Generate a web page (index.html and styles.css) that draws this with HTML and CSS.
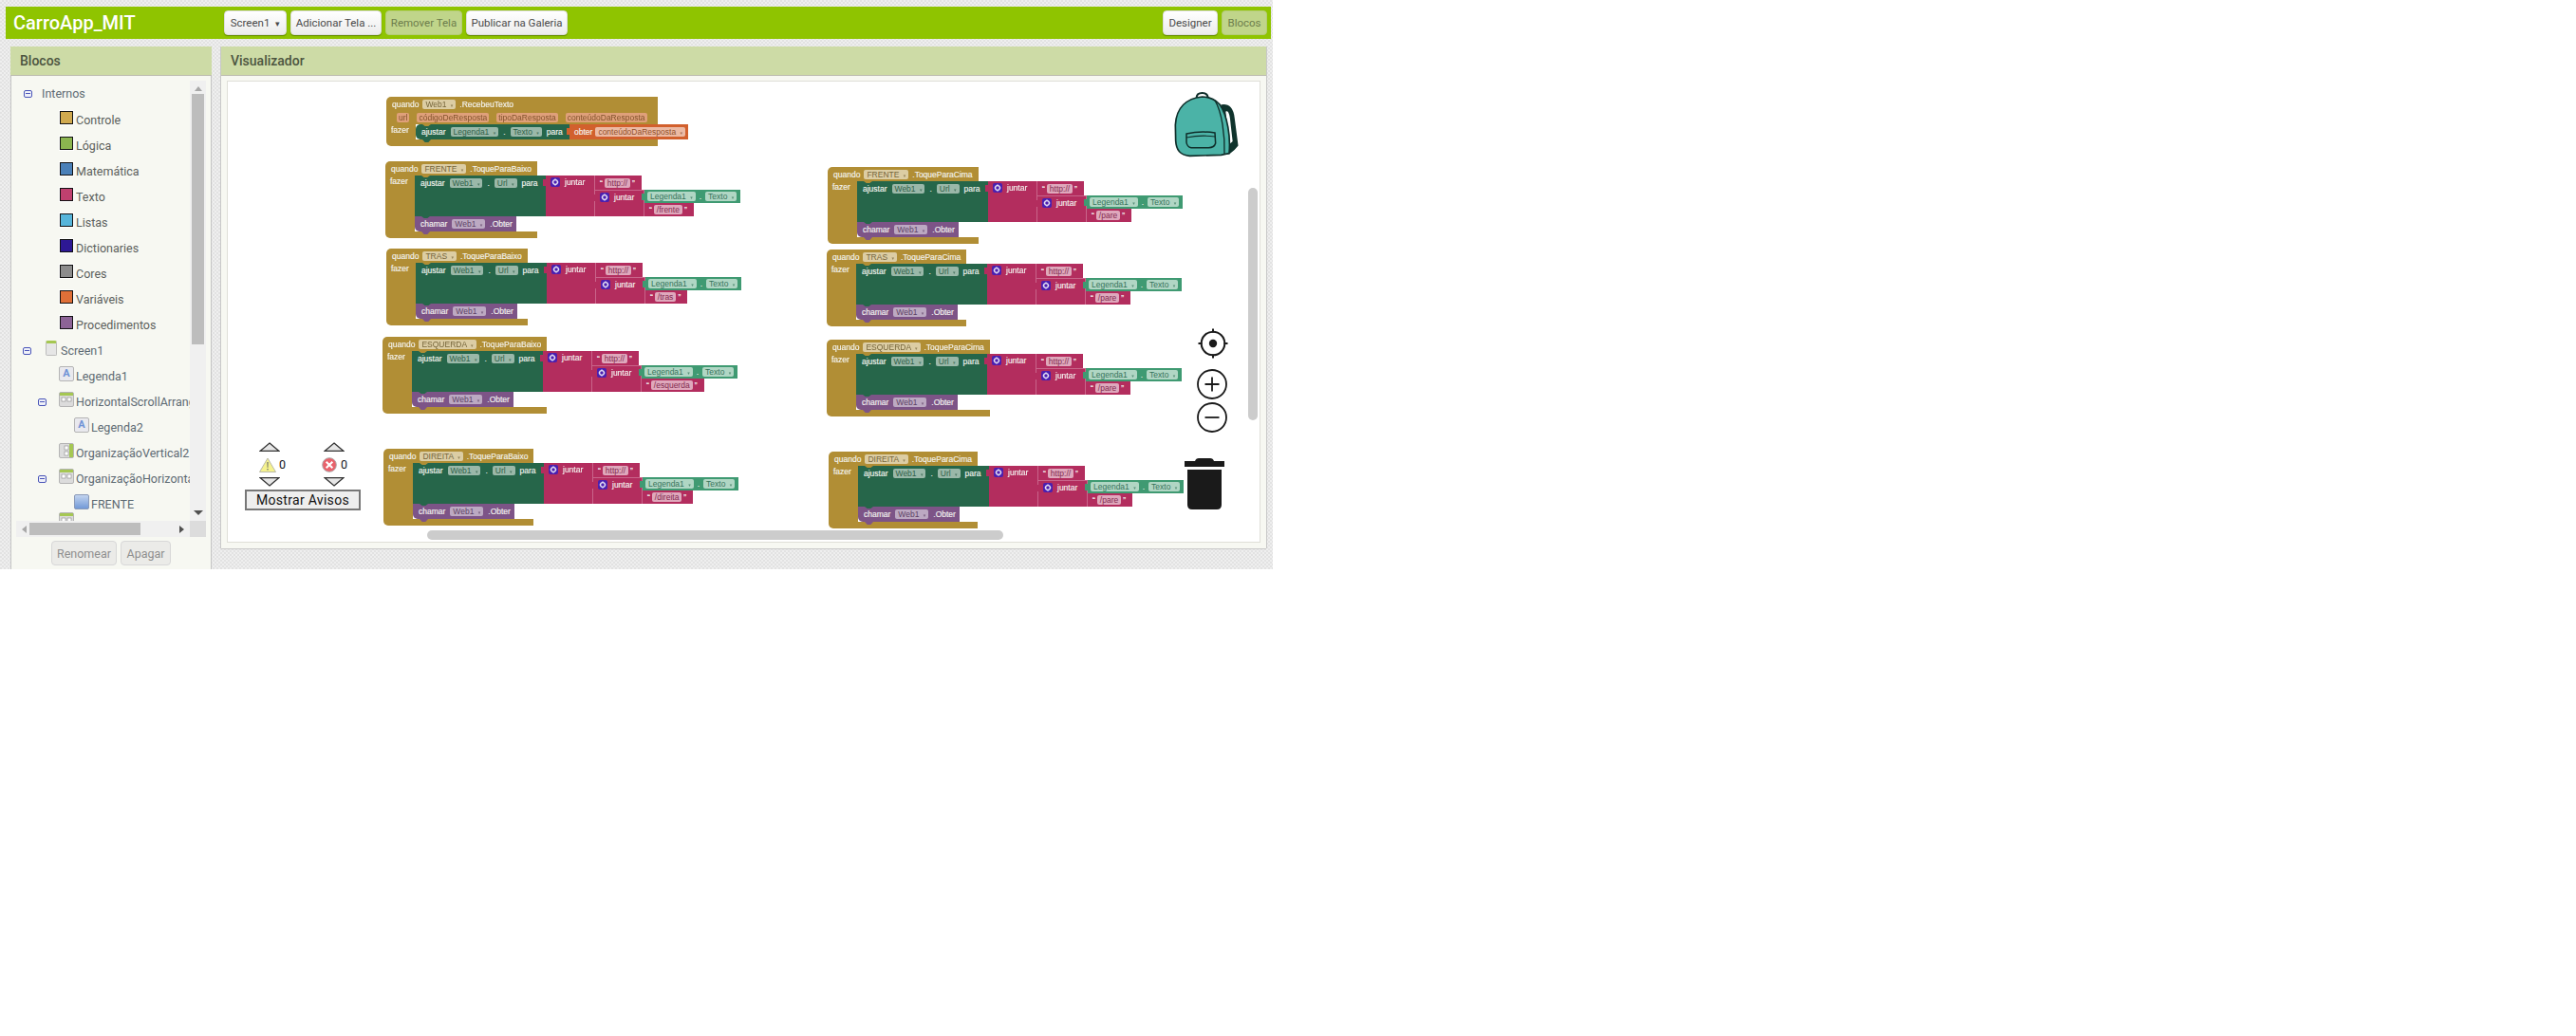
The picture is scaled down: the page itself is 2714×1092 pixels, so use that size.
FILE: index.html
```html
<!DOCTYPE html>
<html lang="pt">
<head>
  <meta charset="UTF-8" />
  <title>CarroApp_MIT - Blocos</title>
  <link rel="stylesheet" href="styles.css">
</head>
<body>
  <svg class="defs" width="0" height="0">
    <symbol id="ico-join" viewBox="0 0 10 10">
      <rect width="10" height="10" rx="2" fill="#4a1fb0"/>
      <circle cx="5" cy="5" r="2.4" fill="none" stroke="#e8e4f6" stroke-width="1.3"/>
      <path d="M5 1.2v1.4M5 7.4v1.4M1.6 5h1.4M7 5h1.4" stroke="#e8e4f6" stroke-width="1"/>
    </symbol>
    <symbol id="ico-hbox" viewBox="0 0 16 16">
      <rect x=".5" y=".5" width="15" height="15" rx="1.5" fill="#dcdcdc" stroke="#b4b4b4"/>
      <path d="M1 1h14v3H1z" fill="#a5c752"/>
      <rect x="3" y="6" width="4" height="4" fill="#fff" stroke="#888" stroke-width=".6"/>
      <rect x="9" y="6" width="4" height="4" fill="#fff" stroke="#888" stroke-width=".6"/>
    </symbol>
    <symbol id="ico-vbox" viewBox="0 0 16 16">
      <rect x=".5" y=".5" width="15" height="15" rx="1.5" fill="#dcdcdc" stroke="#b4b4b4"/>
      <path d="M11 1h4v14h-4z" fill="#a5c752"/>
      <rect x="6" y="3" width="4" height="4" fill="#fff" stroke="#888" stroke-width=".6"/>
      <rect x="6" y="9" width="4" height="4" fill="#fff" stroke="#888" stroke-width=".6"/>
    </symbol>
    <symbol id="ico-tri" viewBox="0 0 22 10">
      <path d="M11 1L21 9.500H1z" fill="#e6e6e6" stroke="#333" stroke-width="1.300"/>
    </symbol>
    <linearGradient id="btn-blue" x1="0" y1="0" x2="0" y2="1">
      <stop offset="0" stop-color="#c5d6f0"/>
      <stop offset="1" stop-color="#6f97d6"/>
    </linearGradient>
  </svg>

  <div class="page">
    <!-- barra superior -->
    <header class="topbar">
      <div class="app-title">CarroApp_MIT</div>
      <div class="top-actions">
        <button class="btn btn-screen">Screen1 <span class="caret">▾</span></button>
        <button class="btn btn-add">Adicionar Tela ...</button>
        <button class="btn btn-off btn-remove">Remover Tela</button>
        <button class="btn btn-publish">Publicar na Galeria</button>
      </div>
      <div class="top-views">
        <button class="btn btn-designer">Designer</button>
        <button class="btn btn-off btn-blocks">Blocos</button>
      </div>
    </header>

    <div class="work">
      <!-- painel de blocos -->
      <aside class="side">
        <div class="panel-head">Blocos</div>
        <div class="side-body">
          <div class="tree-box">
            <div class="tree">
              <div class="row row-top"><span class="minus"></span>Internos</div>
              <div class="row row-cat"><span class="swatch sw-control"></span>Controle</div>
              <div class="row row-cat"><span class="swatch sw-logic"></span>Lógica</div>
              <div class="row row-cat"><span class="swatch sw-math"></span>Matemática</div>
              <div class="row row-cat"><span class="swatch sw-text"></span>Texto</div>
              <div class="row row-cat"><span class="swatch sw-list"></span>Listas</div>
              <div class="row row-cat"><span class="swatch sw-dict"></span>Dictionaries</div>
              <div class="row row-cat"><span class="swatch sw-color"></span>Cores</div>
              <div class="row row-cat"><span class="swatch sw-var"></span>Variáveis</div>
              <div class="row row-cat"><span class="swatch sw-proc"></span>Procedimentos</div>
              <div class="row row-screen"><span class="minus"></span><span class="screen-ico"></span>Screen1</div>
              <div class="row row-l2"><span class="label-ico">A</span>Legenda1</div>
              <div class="row row-l2 has-minus"><span class="minus"></span><svg class="tree-ico"><use href="#ico-hbox"/></svg>HorizontalScrollArrangement1</div>
              <div class="row row-l3"><span class="label-ico">A</span>Legenda2</div>
              <div class="row row-l2"><svg class="tree-ico"><use href="#ico-vbox"/></svg>OrganizaçãoVertical2</div>
              <div class="row row-l2 has-minus"><span class="minus"></span><svg class="tree-ico"><use href="#ico-hbox"/></svg>OrganizaçãoHorizontal1</div>
              <div class="row row-l3"><svg class="tree-ico"><rect x=".5" y=".5" width="15" height="15" rx="1.500" fill="url(#btn-blue)" stroke="#8a9ab8"/></svg>FRENTE</div>
              <div class="row row-l2 row-sliver"><svg class="tree-ico"><use href="#ico-hbox"/></svg></div>
            </div>
            <div class="vscroll">
              <span class="arrow arrow-up"></span>
              <span class="vthumb"></span>
              <span class="arrow arrow-down"></span>
            </div>
            <div class="hscroll">
              <span class="arrow arrow-left"></span>
              <span class="hthumb"></span>
              <span class="arrow arrow-right"></span>
            </div>
            <div class="corner"></div>
          </div>
          <div class="side-actions">
            <button class="btn-grey btn-rename">Renomear</button>
            <button class="btn-grey btn-delete">Apagar</button>
          </div>
        </div>
      </aside>

      <!-- visualizador -->
      <section class="viewer">
        <div class="panel-head">Visualizador</div>
        <div class="viewer-body">
          <div class="canvas">

            <div class="evt at-recebeu">
              <div class="evt-head"><span>quando</span><span class="pill pill-brown">Web1 <i>▾</i></span><span>.RecebeuTexto</span></div>
              <div class="evt-params"><span class="pill-param">url</span><span class="pill-param">códigoDeResposta</span><span class="pill-param">tipoDaResposta</span><span class="pill-param">conteúdoDaResposta</span></div>
              <div class="evt-body">
                <div class="evt-arm">fazer</div>
                <div class="evt-stack">
                  <div class="stmt-row">
                    <div class="set set-single"><span>ajustar</span><span class="pill pill-green">Legenda1 <i>▾</i></span><span>.</span><span class="pill pill-green">Texto <i>▾</i></span><span>para</span></div>
                    <div class="get"><span>obter</span><span class="pill pill-orange">conteúdoDaResposta <i>▾</i></span></div>
                  </div>
                </div>
              </div>
              <div class="evt-foot"></div>
            </div>

            <div class="evt at-fb">
              <div class="evt-head"><span>quando</span><span class="pill pill-brown">FRENTE <i>▾</i></span><span>.ToqueParaBaixo</span></div>
              <div class="evt-body">
                <div class="evt-arm">fazer</div>
                <div class="evt-stack">
                  <div class="stmt-row">
                    <div class="set"><span>ajustar</span><span class="pill pill-green">Web1 <i>▾</i></span><span>.</span><span class="pill pill-green">Url <i>▾</i></span><span>para</span></div>
                    <div class="join">
                      <div class="join-label"><svg class="join-ico"><use href="#ico-join"/></svg>juntar</div>
                      <div class="join-items">
                        <div class="str">“<span class="pill pill-pink">http://</span>”</div>
                        <div class="join join-inner">
                          <div class="join-label"><svg class="join-ico"><use href="#ico-join"/></svg>juntar</div>
                          <div class="join-items">
                            <div class="val"><span class="pill pill-val">Legenda1 <i>▾</i></span><span>.</span><span class="pill pill-val">Texto <i>▾</i></span></div>
                            <div class="str">“<span class="pill pill-pink">/frente</span>”</div>
                          </div>
                        </div>
                      </div>
                    </div>
                  </div>
                  <div class="call"><span>chamar</span><span class="pill pill-purple">Web1 <i>▾</i></span><span>.Obter</span></div>
                </div>
              </div>
              <div class="evt-foot"></div>
            </div>

            <div class="evt at-tb">
              <div class="evt-head"><span>quando</span><span class="pill pill-brown">TRAS <i>▾</i></span><span>.ToqueParaBaixo</span></div>
              <div class="evt-body">
                <div class="evt-arm">fazer</div>
                <div class="evt-stack">
                  <div class="stmt-row">
                    <div class="set"><span>ajustar</span><span class="pill pill-green">Web1 <i>▾</i></span><span>.</span><span class="pill pill-green">Url <i>▾</i></span><span>para</span></div>
                    <div class="join">
                      <div class="join-label"><svg class="join-ico"><use href="#ico-join"/></svg>juntar</div>
                      <div class="join-items">
                        <div class="str">“<span class="pill pill-pink">http://</span>”</div>
                        <div class="join join-inner">
                          <div class="join-label"><svg class="join-ico"><use href="#ico-join"/></svg>juntar</div>
                          <div class="join-items">
                            <div class="val"><span class="pill pill-val">Legenda1 <i>▾</i></span><span>.</span><span class="pill pill-val">Texto <i>▾</i></span></div>
                            <div class="str">“<span class="pill pill-pink">/tras</span>”</div>
                          </div>
                        </div>
                      </div>
                    </div>
                  </div>
                  <div class="call"><span>chamar</span><span class="pill pill-purple">Web1 <i>▾</i></span><span>.Obter</span></div>
                </div>
              </div>
              <div class="evt-foot"></div>
            </div>

            <div class="evt at-eb">
              <div class="evt-head"><span>quando</span><span class="pill pill-brown">ESQUERDA <i>▾</i></span><span>.ToqueParaBaixo</span></div>
              <div class="evt-body">
                <div class="evt-arm">fazer</div>
                <div class="evt-stack">
                  <div class="stmt-row">
                    <div class="set"><span>ajustar</span><span class="pill pill-green">Web1 <i>▾</i></span><span>.</span><span class="pill pill-green">Url <i>▾</i></span><span>para</span></div>
                    <div class="join">
                      <div class="join-label"><svg class="join-ico"><use href="#ico-join"/></svg>juntar</div>
                      <div class="join-items">
                        <div class="str">“<span class="pill pill-pink">http://</span>”</div>
                        <div class="join join-inner">
                          <div class="join-label"><svg class="join-ico"><use href="#ico-join"/></svg>juntar</div>
                          <div class="join-items">
                            <div class="val"><span class="pill pill-val">Legenda1 <i>▾</i></span><span>.</span><span class="pill pill-val">Texto <i>▾</i></span></div>
                            <div class="str">“<span class="pill pill-pink">/esquerda</span>”</div>
                          </div>
                        </div>
                      </div>
                    </div>
                  </div>
                  <div class="call"><span>chamar</span><span class="pill pill-purple">Web1 <i>▾</i></span><span>.Obter</span></div>
                </div>
              </div>
              <div class="evt-foot"></div>
            </div>

            <div class="evt at-db">
              <div class="evt-head"><span>quando</span><span class="pill pill-brown">DIREITA <i>▾</i></span><span>.ToqueParaBaixo</span></div>
              <div class="evt-body">
                <div class="evt-arm">fazer</div>
                <div class="evt-stack">
                  <div class="stmt-row">
                    <div class="set"><span>ajustar</span><span class="pill pill-green">Web1 <i>▾</i></span><span>.</span><span class="pill pill-green">Url <i>▾</i></span><span>para</span></div>
                    <div class="join">
                      <div class="join-label"><svg class="join-ico"><use href="#ico-join"/></svg>juntar</div>
                      <div class="join-items">
                        <div class="str">“<span class="pill pill-pink">http://</span>”</div>
                        <div class="join join-inner">
                          <div class="join-label"><svg class="join-ico"><use href="#ico-join"/></svg>juntar</div>
                          <div class="join-items">
                            <div class="val"><span class="pill pill-val">Legenda1 <i>▾</i></span><span>.</span><span class="pill pill-val">Texto <i>▾</i></span></div>
                            <div class="str">“<span class="pill pill-pink">/direita</span>”</div>
                          </div>
                        </div>
                      </div>
                    </div>
                  </div>
                  <div class="call"><span>chamar</span><span class="pill pill-purple">Web1 <i>▾</i></span><span>.Obter</span></div>
                </div>
              </div>
              <div class="evt-foot"></div>
            </div>

            <div class="evt at-fc">
              <div class="evt-head"><span>quando</span><span class="pill pill-brown">FRENTE <i>▾</i></span><span>.ToqueParaCima</span></div>
              <div class="evt-body">
                <div class="evt-arm">fazer</div>
                <div class="evt-stack">
                  <div class="stmt-row">
                    <div class="set"><span>ajustar</span><span class="pill pill-green">Web1 <i>▾</i></span><span>.</span><span class="pill pill-green">Url <i>▾</i></span><span>para</span></div>
                    <div class="join">
                      <div class="join-label"><svg class="join-ico"><use href="#ico-join"/></svg>juntar</div>
                      <div class="join-items">
                        <div class="str">“<span class="pill pill-pink">http://</span>”</div>
                        <div class="join join-inner">
                          <div class="join-label"><svg class="join-ico"><use href="#ico-join"/></svg>juntar</div>
                          <div class="join-items">
                            <div class="val"><span class="pill pill-val">Legenda1 <i>▾</i></span><span>.</span><span class="pill pill-val">Texto <i>▾</i></span></div>
                            <div class="str">“<span class="pill pill-pink">/pare</span>”</div>
                          </div>
                        </div>
                      </div>
                    </div>
                  </div>
                  <div class="call"><span>chamar</span><span class="pill pill-purple">Web1 <i>▾</i></span><span>.Obter</span></div>
                </div>
              </div>
              <div class="evt-foot"></div>
            </div>

            <div class="evt at-tc">
              <div class="evt-head"><span>quando</span><span class="pill pill-brown">TRAS <i>▾</i></span><span>.ToqueParaCima</span></div>
              <div class="evt-body">
                <div class="evt-arm">fazer</div>
                <div class="evt-stack">
                  <div class="stmt-row">
                    <div class="set"><span>ajustar</span><span class="pill pill-green">Web1 <i>▾</i></span><span>.</span><span class="pill pill-green">Url <i>▾</i></span><span>para</span></div>
                    <div class="join">
                      <div class="join-label"><svg class="join-ico"><use href="#ico-join"/></svg>juntar</div>
                      <div class="join-items">
                        <div class="str">“<span class="pill pill-pink">http://</span>”</div>
                        <div class="join join-inner">
                          <div class="join-label"><svg class="join-ico"><use href="#ico-join"/></svg>juntar</div>
                          <div class="join-items">
                            <div class="val"><span class="pill pill-val">Legenda1 <i>▾</i></span><span>.</span><span class="pill pill-val">Texto <i>▾</i></span></div>
                            <div class="str">“<span class="pill pill-pink">/pare</span>”</div>
                          </div>
                        </div>
                      </div>
                    </div>
                  </div>
                  <div class="call"><span>chamar</span><span class="pill pill-purple">Web1 <i>▾</i></span><span>.Obter</span></div>
                </div>
              </div>
              <div class="evt-foot"></div>
            </div>

            <div class="evt at-ec">
              <div class="evt-head"><span>quando</span><span class="pill pill-brown">ESQUERDA <i>▾</i></span><span>.ToqueParaCima</span></div>
              <div class="evt-body">
                <div class="evt-arm">fazer</div>
                <div class="evt-stack">
                  <div class="stmt-row">
                    <div class="set"><span>ajustar</span><span class="pill pill-green">Web1 <i>▾</i></span><span>.</span><span class="pill pill-green">Url <i>▾</i></span><span>para</span></div>
                    <div class="join">
                      <div class="join-label"><svg class="join-ico"><use href="#ico-join"/></svg>juntar</div>
                      <div class="join-items">
                        <div class="str">“<span class="pill pill-pink">http://</span>”</div>
                        <div class="join join-inner">
                          <div class="join-label"><svg class="join-ico"><use href="#ico-join"/></svg>juntar</div>
                          <div class="join-items">
                            <div class="val"><span class="pill pill-val">Legenda1 <i>▾</i></span><span>.</span><span class="pill pill-val">Texto <i>▾</i></span></div>
                            <div class="str">“<span class="pill pill-pink">/pare</span>”</div>
                          </div>
                        </div>
                      </div>
                    </div>
                  </div>
                  <div class="call"><span>chamar</span><span class="pill pill-purple">Web1 <i>▾</i></span><span>.Obter</span></div>
                </div>
              </div>
              <div class="evt-foot"></div>
            </div>

            <div class="evt at-dc">
              <div class="evt-head"><span>quando</span><span class="pill pill-brown">DIREITA <i>▾</i></span><span>.ToqueParaCima</span></div>
              <div class="evt-body">
                <div class="evt-arm">fazer</div>
                <div class="evt-stack">
                  <div class="stmt-row">
                    <div class="set"><span>ajustar</span><span class="pill pill-green">Web1 <i>▾</i></span><span>.</span><span class="pill pill-green">Url <i>▾</i></span><span>para</span></div>
                    <div class="join">
                      <div class="join-label"><svg class="join-ico"><use href="#ico-join"/></svg>juntar</div>
                      <div class="join-items">
                        <div class="str">“<span class="pill pill-pink">http://</span>”</div>
                        <div class="join join-inner">
                          <div class="join-label"><svg class="join-ico"><use href="#ico-join"/></svg>juntar</div>
                          <div class="join-items">
                            <div class="val"><span class="pill pill-val">Legenda1 <i>▾</i></span><span>.</span><span class="pill pill-val">Texto <i>▾</i></span></div>
                            <div class="str">“<span class="pill pill-pink">/pare</span>”</div>
                          </div>
                        </div>
                      </div>
                    </div>
                  </div>
                  <div class="call"><span>chamar</span><span class="pill pill-purple">Web1 <i>▾</i></span><span>.Obter</span></div>
                </div>
              </div>
              <div class="evt-foot"></div>
            </div>

            <!-- mochila -->
            <svg class="backpack" viewBox="108 293 210 210">
              <path d="M262 338C285 335 297 350 300 380L311 465Q300 480 285 490L275 490Z" fill="#0f332c" stroke="#0f332c" stroke-width="5"/>
              <path d="M274 358C284 352 288 372 290 400L296 452L285 462Z" fill="#fff"/>
              <path d="M182 314Q182 299 200 299Q218 299 218 316" fill="none" stroke="#0f2e2a" stroke-width="6"/>
              <path d="M200 311C150 316 118 345 115 400L116 450C118 480 130 495 160 498L260 495L285 490C290 440 280 370 255 335C240 320 220 311 200 311Z" fill="#4bb3a7" stroke="#0f2e2a" stroke-width="5"/>
              <path d="M240 322C262 360 272 430 270 493" fill="none" stroke="#0f2e2a" stroke-width="4"/>
              <path d="M150 428Q195 418 240 425L242 458Q238 472 220 472L165 472Q152 470 150 455Z" fill="#4bb3a7" stroke="#0f2e2a" stroke-width="4.500"/>
              <path d="M150 440Q195 431 241 437" fill="none" stroke="#0f2e2a" stroke-width="3.500"/>
            </svg>

            <!-- controles de zoom -->
            <svg class="ctl ctl-center" viewBox="0 0 32 32">
              <circle cx="16" cy="16" r="12.300" fill="#fff" stroke="#1a1a1a" stroke-width="2"/>
              <circle cx="16" cy="16" r="4.200" fill="#1a1a1a"/>
              <path d="M16 .5v4M16 27.500v4M.5 16h4M27.500 16h4" stroke="#1a1a1a" stroke-width="2"/>
            </svg>
            <svg class="ctl ctl-plus" viewBox="0 0 32 32">
              <circle cx="16" cy="16" r="15" fill="#fff" stroke="#1a1a1a" stroke-width="1.800"/>
              <path d="M16 8.500v15M8.500 16h15" stroke="#1a1a1a" stroke-width="1.800"/>
            </svg>
            <svg class="ctl ctl-minus" viewBox="0 0 32 32">
              <circle cx="16" cy="16" r="15" fill="#fff" stroke="#1a1a1a" stroke-width="1.800"/>
              <path d="M8.500 16h15" stroke="#1a1a1a" stroke-width="1.800"/>
            </svg>

            <!-- lixeira -->
            <svg class="trash" viewBox="0 0 42 54">
              <path d="M0 3h11Q12 0 15 0h12Q30 0 31 3h11v6H0z" fill="#1a1a1a"/>
              <path d="M3 12h36v37q0 5-5 5H8q-5 0-5-5z" fill="#1a1a1a"/>
            </svg>

            <!-- avisos -->
            <div class="warnings">
              <div class="warn-counts">
                <div class="warn-col">
                  <svg class="tri"><use href="#ico-tri"/></svg>
                  <div class="warn-mid">
                    <svg class="warn-ico" viewBox="0 0 18 16"><path d="M9 1L17.500 15.500H.5z" fill="#f5f28e" stroke="#b9b9a8"/><path d="M8.200 5h1.600l-.3 6H8.500zM8.200 12h1.600v1.600H8.200z" fill="#8a8a70"/></svg>
                    <span>0</span>
                  </div>
                  <svg class="tri tri-down"><use href="#ico-tri"/></svg>
                </div>
                <div class="warn-col warn-col-err">
                  <svg class="tri"><use href="#ico-tri"/></svg>
                  <div class="warn-mid">
                    <svg class="warn-ico" viewBox="0 0 17 17"><circle cx="8.500" cy="8.500" r="7.800" fill="#e9626b" stroke="#a9a9a9"/><path d="M5 5l7 7M12 5l-7 7" stroke="#fff" stroke-width="2.200"/></svg>
                    <span>0</span>
                  </div>
                  <svg class="tri tri-down"><use href="#ico-tri"/></svg>
                </div>
              </div>
              <button class="warn-btn">Mostrar Avisos</button>
            </div>

            <div class="canvas-vbar"></div>
            <div class="canvas-hbar"></div>
          </div>
        </div>
      </section>
    </div>
  </div>
</body>
</html>
```

FILE: styles.css
```css
:root {
  --lime: #8fc400;
  --head: #cddba6;
  --soft: #f7f8f2;
  --brown: #b18e35;
  --dark-green: #26664a;
  --pink: #b32d5e;
  --value: #3f9a72;
  --purple: #7d5487;
  --orange: #d2602d;
}

html, body {
  margin: 0;
  background: #fff;
  font-family: Roboto, "Liberation Sans", sans-serif;
  color: #555;
}

.defs {
  position: absolute;
}

.page {
  width: 1341px;
  height: 600px;
  box-sizing: border-box;
  padding-top: 7px;
  overflow: hidden;
  background: repeating-conic-gradient(#e2e2e2 0 25%, #efefef 0 50%) 0 0 / 4px 4px;
}

/* barra superior */
.topbar {
  height: 34px;
  width: 1333px;
  margin-left: 6px;
  background: var(--lime);
  display: flex;
  align-items: center;
}
.app-title {
  width: 230px;
  box-sizing: border-box;
  padding-left: 8px;
  color: #fff;
  font-size: 20px;
  font-weight: 500;
}
.top-actions {
  display: flex;
  gap: 4px;
}
.top-views {
  display: flex;
  gap: 4px;
  margin-left: auto;
  margin-right: 4px;
}
.btn {
  height: 26px;
  padding: 0;
  box-sizing: border-box;
  border: 1px solid #ddd;
  border-radius: 4px;
  background: linear-gradient(#ffffff, #ececec);
  box-shadow: 0 1px 1px #0000004d;
  font-family: inherit;
  font-size: 11.500px;
  color: #4a4a4a;
  white-space: nowrap;
}
.btn-off {
  background: #c0d58a;
  border-color: #b5cc78;
  box-shadow: none;
  color: #6d7d4c;
}
.btn-screen { width: 66px; }
.btn-add { width: 96px; }
.btn-remove { width: 81px; }
.btn-publish { width: 107px; }
.btn-designer { width: 58px; }
.btn-blocks { width: 48px; }
.caret {
  font-size: 9px;
  margin-left: 3px;
}

.work {
  display: flex;
  gap: 10px;
  margin: 8px 0 0 11px;
  align-items: flex-start;
}

.panel-head {
  height: 30px;
  line-height: 30px;
  padding-left: 10px;
  background: var(--head);
  border-bottom: 1px solid #bcbcb0;
  color: #4c5540;
  font-size: 14px;
  font-weight: 500;
}

/* painel de blocos */
.side {
  width: 212px;
  height: 551px;
  box-sizing: border-box;
  background: var(--soft);
  border-left: 1px solid #c4c4c4;
  border-right: 1px solid #c4c4c4;
}
.side .panel-head {
  margin-left: -1px;
  margin-right: -1px;
}
.side-body {
  padding: 5px 5px 0 5px;
}
.tree-box {
  display: grid;
  grid-template-columns: 183px 17px;
  grid-template-rows: 464px 17px;
}
.tree {
  overflow: hidden;
}
.row {
  height: 27px;
  display: flex;
  align-items: center;
  white-space: nowrap;
  font-size: 12.500px;
  color: #5b5f5c;
}
.row-top {
  padding-left: 8px;
  color: #5d6a72;
}
.row-top .minus {
  margin-right: 10px;
}
.row-cat {
  padding-left: 46px;
  padding-top: 2px;
  box-sizing: border-box;
}
.row-screen {
  padding-left: 7px;
  padding-top: 2px;
  box-sizing: border-box;
  color: #5d6a72;
}
.row-screen .minus {
  margin-right: 15px;
}
.row-l2 {
  padding-left: 45px;
  padding-top: 2px;
  box-sizing: border-box;
  color: #5d6a72;
}
.row-l2.has-minus {
  padding-left: 23px;
}
.row-l2.has-minus .minus {
  margin-right: 13px;
}
.row-l3 {
  padding-left: 61px;
  padding-top: 2px;
  box-sizing: border-box;
  color: #5d6a72;
}
.row-sliver {
  align-items: flex-start;
}
.minus {
  width: 9px;
  height: 8px;
  box-sizing: border-box;
  border: 1px solid #4a55b8;
  border-radius: 2px;
  background: linear-gradient(#4a55b8, #4a55b8) center / 5px 1px no-repeat #eef0f8;
  flex: none;
}
.swatch {
  width: 14px;
  height: 14px;
  box-sizing: border-box;
  border: 1px solid #111;
  box-shadow: 0 0 0 1px #fff;
  margin: -6px 3px 0 0;
  flex: none;
}
.sw-control { background: #d0a94f; }
.sw-logic { background: #8bb54f; }
.sw-math { background: #4a80b8; }
.sw-text { background: #c0406f; }
.sw-list { background: #56b5da; }
.sw-dict { background: #2d1894; }
.sw-color { background: #8c8c8c; }
.sw-var { background: #e07038; }
.sw-proc { background: #8c6396; }
.screen-ico {
  width: 12px;
  height: 16px;
  box-sizing: border-box;
  margin: -6px 4px 0 0;
  border: 1px solid #bdbdbd;
  border-top: 3px solid #a5c752;
  border-radius: 2px;
  background: #e6e6e6;
  flex: none;
}
.tree-ico {
  width: 16px;
  height: 16px;
  margin: -6px 2px 0 0;
  flex: none;
}
.label-ico {
  width: 16px;
  height: 16px;
  box-sizing: border-box;
  margin: -6px 2px 0 0;
  flex: none;
  border: 1px solid #b4b4b4;
  border-radius: 2px;
  background: #e9e9ee;
  font-size: 11px;
  font-weight: 700;
  line-height: 13px;
  text-align: center;
  color: #6f93d6;
}

.vscroll {
  background: #f0f0f0;
  display: flex;
  flex-direction: column;
  align-items: center;
}
.vthumb {
  width: 13px;
  height: 264px;
  margin-top: 3px;
  background: #bdbdbd;
}
.hscroll {
  background: #f0f0f0;
  display: flex;
  align-items: center;
}
.hthumb {
  width: 117px;
  height: 13px;
  margin-left: 3px;
  background: #bdbdbd;
}
.corner {
  background: #dcdcdc;
}
.arrow {
  display: block;
  flex: none;
}
.arrow-up {
  margin-top: 6px;
  border: 4px solid transparent;
  border-top: 0;
  border-bottom: 5px solid #a8a8a8;
}
.arrow-down {
  margin-top: auto;
  margin-bottom: 6px;
  border: 5px solid transparent;
  border-bottom: 0;
  border-top: 5px solid #505050;
}
.arrow-left {
  margin-left: 6px;
  border: 4px solid transparent;
  border-left: 0;
  border-right: 5px solid #a8a8a8;
}
.arrow-right {
  margin-left: auto;
  margin-right: 6px;
  border: 4px solid transparent;
  border-right: 0;
  border-left: 5px solid #505050;
}
.side-actions {
  display: flex;
  justify-content: center;
  gap: 4px;
  margin-top: 4px;
}
.btn-grey {
  height: 26px;
  box-sizing: border-box;
  padding: 0;
  border: 1px solid #d8d8d8;
  border-radius: 4px;
  background: #ebebe8;
  font-family: inherit;
  font-size: 12.500px;
  color: #8e8e8e;
}
.btn-rename { width: 69px; }
.btn-delete { width: 53px; }

/* visualizador */
.viewer {
  width: 1101px;
  background: var(--soft);
  box-shadow: 0 1px 0 #c8c8c8, 1px 0 0 #c8c8c8, -1px 0 0 #c8c8c8;
}
.viewer-body {
  padding: 6px 7px 7px 7px;
}
.canvas {
  position: relative;
  height: 485px;
  background: #fff;
  box-shadow: 0 0 0 1px #dfdfd8;
  overflow: hidden;
}

/* blocos: posicao livre na area de trabalho */
.evt {
  position: absolute;
  font-family: "Liberation Sans", "DejaVu Sans", sans-serif;
  font-size: 8.500px;
  line-height: 10px;
  color: #f4f4f0;
  -webkit-text-stroke: .15px #f4f4f0;
  filter: blur(.3px);
}
.at-recebeu { left: 167px; top: 16px; }
.at-fb { left: 166px; top: 84px; }
.at-tb { left: 167px; top: 176px; }
.at-eb { left: 163px; top: 269px; }
.at-db { left: 164px; top: 387px; }
.at-fc { left: 632px; top: 90px; }
.at-tc { left: 631px; top: 177px; }
.at-ec { left: 631px; top: 272px; }
.at-dc { left: 633px; top: 390px; }

.evt-head {
  height: 15px;
  padding: 0 6px;
  display: flex;
  align-items: center;
  gap: 4px;
  white-space: nowrap;
  background: var(--brown);
  border-radius: 5px 0 0 0;
}
.evt-params {
  height: 14px;
  padding: 0 11px;
  display: flex;
  align-items: center;
  gap: 8px;
  background: var(--brown);
  white-space: nowrap;
}
.evt-body {
  width: 0;
  display: flex;
}
.evt-arm {
  flex: none;
  width: 31px;
  box-sizing: border-box;
  padding: 1px 0 0 5px;
  background: var(--brown);
}
.evt-stack {
  flex: none;
  width: max-content;
}
.stmt-row {
  display: flex;
}
.evt-foot {
  height: 7px;
  background: var(--brown);
  border-radius: 0 0 0 5px;
}

.set {
  position: relative;
  height: 43px;
  width: 138px;
  box-sizing: border-box;
  padding: 3px 0 0 6px;
  display: flex;
  align-items: flex-start;
  gap: 5px;
  background: var(--dark-green);
  white-space: nowrap;
}
.set::before {
  content: "";
  position: absolute;
  left: 7px;
  top: 0;
  width: 9px;
  height: 2px;
  background: var(--brown);
  clip-path: polygon(0 0, 100% 0, 70% 100%, 30% 100%);
}
.set-single {
  height: 16px;
  width: 162px;
  border-radius: 5px 0 0 5px;
}
.set-single::after {
  content: "";
  position: absolute;
  left: 7px;
  bottom: -3px;
  width: 9px;
  height: 3px;
  background: var(--dark-green);
  clip-path: polygon(0 0, 100% 0, 70% 100%, 30% 100%);
}
.get {
  position: relative;
  height: 16px;
  width: 125px;
  box-sizing: border-box;
  padding: 3px 0 0 5px;
  display: flex;
  align-items: flex-start;
  gap: 3px;
  background: var(--orange);
  white-space: nowrap;
}
.get::before {
  content: "";
  position: absolute;
  left: -3px;
  top: 4px;
  width: 3px;
  height: 7px;
  background: var(--orange);
}

.join {
  position: relative;
  display: flex;
  align-items: stretch;
}
.join-label {
  position: relative;
  width: 52px;
  box-sizing: border-box;
  padding: 2px 0 0 5px;
  display: flex;
  align-items: flex-start;
  gap: 5px;
  line-height: 11px;
  background: var(--pink);
  border-right: 1px solid #c9648a;
  white-space: nowrap;
}
.join-label::before {
  content: "";
  position: absolute;
  left: -3px;
  top: 4px;
  width: 3px;
  height: 7px;
  background: var(--pink);
}
.join-ico {
  width: 10px;
  height: 10px;
  flex: none;
}
.join-items {
  display: flex;
  flex-direction: column;
  align-items: flex-start;
}
.join-inner {
  height: 28px;
  border-top: 1px solid #c9648a;
  box-sizing: border-box;
}
.join-inner .join-items {
  margin-top: -1px;
}
.str {
  position: relative;
  height: 15px;
  box-sizing: border-box;
  padding: 0 7px 0 5px;
  display: flex;
  align-items: center;
  gap: 2px;
  background: var(--pink);
  white-space: nowrap;
}
.val {
  position: relative;
  height: 15px;
  box-sizing: border-box;
  padding: 0 4px 0 3px;
  display: flex;
  align-items: center;
  gap: 4px;
  background: var(--value);
  white-space: nowrap;
}
.val::before {
  content: "";
  position: absolute;
  left: -3px;
  top: 4px;
  width: 3px;
  height: 7px;
  background: var(--value);
}
.call {
  position: relative;
  height: 16px;
  width: 107px;
  box-sizing: border-box;
  padding: 0 0 0 6px;
  display: flex;
  align-items: center;
  gap: 5px;
  background: var(--purple);
  border-radius: 0 0 0 5px;
  white-space: nowrap;
}
.call::before {
  content: "";
  position: absolute;
  left: 7px;
  top: 0;
  width: 9px;
  height: 2px;
  background: var(--dark-green);
  clip-path: polygon(0 0, 100% 0, 70% 100%, 30% 100%);
}
.call::after {
  content: "";
  position: absolute;
  left: 7px;
  bottom: -3px;
  width: 9px;
  height: 3px;
  background: var(--purple);
  clip-path: polygon(0 0, 100% 0, 70% 100%, 30% 100%);
}

.pill {
  height: 10px;
  line-height: 10px;
  padding: 0 3px;
  border-radius: 2px;
  display: inline-block;
  white-space: nowrap;
  -webkit-text-stroke: 0;
}
.pill i {
  font-style: normal;
  font-size: 5px;
  margin-left: 2px;
  opacity: .7;
}
.pill-brown { background: #dccda4; color: #75653a; }
.pill-green { background: #9ab8a9; color: #2f5f48; }
.pill-val { background: #b0d6c4; color: #35735a; }
.pill-pink { background: #dfa8bc; color: #842a50; }
.pill-purple { background: #bca9c2; color: #5d4266; }
.pill-orange { background: #ecbaa4; color: #915028; }
.pill-param {
  height: 10px;
  line-height: 10px;
  padding: 0 2px;
  border-radius: 2px;
  background: #dfa07a;
  color: #82522c;
  -webkit-text-stroke: 0;
}

/* icones sobre a area de trabalho */
.backpack {
  position: absolute;
  left: 996px;
  top: 10px;
  width: 70px;
  height: 70px;
}
.ctl {
  position: absolute;
  width: 32px;
  height: 32px;
}
.ctl-center { top: 260px; left: 1022px; }
.ctl-plus { top: 303px; left: 1021px; }
.ctl-minus { top: 338px; left: 1021px; }
.trash {
  position: absolute;
  left: 1008px;
  top: 397px;
  width: 42px;
  height: 54px;
}

.warnings {
  position: absolute;
  left: 18px;
  top: 380px;
  width: 122px;
}
.warn-counts {
  display: flex;
  padding-left: 15px;
  gap: 37px;
}
.warn-col {
  width: 28px;
  display: flex;
  flex-direction: column;
  height: 47px;
}
.warn-col-err .tri {
  margin-left: 3px;
}
.tri {
  width: 22px;
  height: 10px;
  flex: none;
}
.tri-down {
  transform: scaleY(-1);
}
.warn-mid {
  height: 15px;
  margin: 6px 0;
  display: flex;
  align-items: center;
  gap: 3px;
  font-size: 12.500px;
  color: #112;
}
.warn-ico {
  width: 18px;
  height: 16px;
  flex: none;
}
.warn-btn {
  display: block;
  width: 122px;
  height: 22px;
  margin-top: 3px;
  box-sizing: border-box;
  padding: 0;
  border: 2px solid #777;
  background: #eeeeee;
  font-family: Roboto, sans-serif;
  font-size: 14px;
  letter-spacing: .3px;
  color: #111;
}

.canvas-vbar {
  position: absolute;
  left: 1075px;
  top: 112px;
  width: 10px;
  height: 245px;
  border-radius: 5px;
  background: #cccccc;
}
.canvas-hbar {
  position: absolute;
  left: 210px;
  top: 473px;
  width: 607px;
  height: 10px;
  border-radius: 5px;
  background: #cccccc;
}
```
